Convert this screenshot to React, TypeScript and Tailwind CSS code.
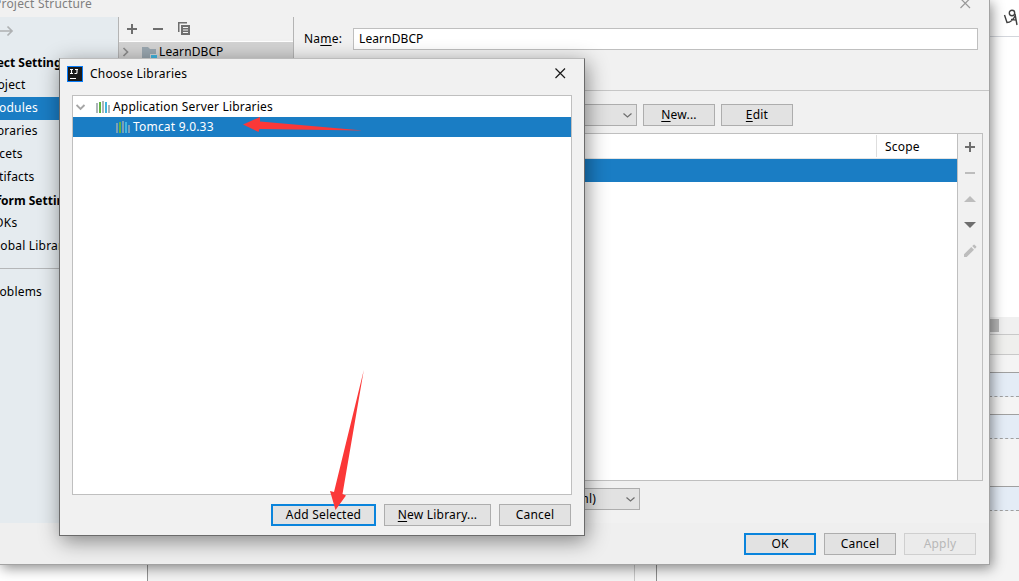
import React from 'react';
import clsx from 'clsx';

const ChevronDown: React.FC = () => (
  <svg width="11" height="7" viewBox="0 0 11 7" fill="none" stroke="#6e6e6e" strokeWidth="1.2">
    <path d="M1.500 1.500 L5.500 5 L9.500 1.500" />
  </svg>
);

const CloseIcon: React.FC<{ color: string }> = ({ color }) => (
  <svg width="11" height="11" viewBox="0 0 11 11" stroke={color} strokeWidth="1.2">
    <path d="M0.5 0.5 L10 10 M10 0.5 L0.5 10" />
  </svg>
);

const PlusIcon: React.FC = () => (
  <svg width="10" height="10" viewBox="0 0 10 10" fill="#6e6e6e">
    <path d="M4 0h2v4h4v2H6v4H4V6H0V4h4z" />
  </svg>
);

const MinusIcon: React.FC<{ color: string }> = ({ color }) => (
  <svg width="10" height="10" viewBox="0 0 10 10" fill={color}>
    <path d="M0 4h10v2H0z" />
  </svg>
);

const CopyIcon: React.FC = () => (
  <svg className="-ml-px -mt-px" width="12" height="13" viewBox="0 0 12 13" fill="#6e6e6e">
    <path d="M0 0h9v1.5H1.5V10H0z" />
    <path fillRule="evenodd" d="M3 3h9v10H3zM5 5v1h5V5zM5 7.5v1h5v-1zM5 10v1h5v-1z" />
  </svg>
);

const LibraryIcon: React.FC<{ dim?: boolean }> = ({ dim }) => (
  <svg width="14" height="12" viewBox="0 0 14 12" shapeRendering="crispEdges">
    <path d="M0 2h2v10H0zM6 0h2v12H6z" fill={dim ? '#7c9fb9' : '#adb5ba'} />
    <path d="M3 1h2v11H3z" fill="#62b543" />
    <path d="M9 1h2v11H9z" fill="#40b6e0" />
    <path d="M12 4h2v8h-2z" fill={dim ? '#7c9fb9' : '#adb5ba'} />
  </svg>
);

const IdeaLogo: React.FC = () => (
  <svg width="16" height="16" viewBox="0 0 16 16">
    <rect width="16" height="16" fill="#087cfa" />
    <rect x="1" y="1" width="14" height="14" fill="#1a1a1a" />
    <path d="M3 3.500h3M4.500 3v5M3 7.500h3M8 3.500h3M10 3v3.500q0 1-1 1H7.500" stroke="#fff" strokeWidth="1.1" fill="none" />
    <path d="M3 12h6v1H3z" fill="#fff" />
  </svg>
);

interface ButtonProps {
  width: string;
  primary?: boolean;
  disabled?: boolean;
  children: React.ReactNode;
}

const Button: React.FC<ButtonProps> = ({ width, primary, disabled, children }) => (
  <button
    className={clsx(
      'h-[22px] shrink-0 flex items-center justify-center whitespace-pre',
      width,
      primary ? 'border-2 border-[#0a84dc] bg-[#e2e2e2]' : 'border',
      !primary && (disabled ? 'border-[#cfcfcf] bg-[#ebebeb] text-[#b8b8b8]' : 'border-[#adadad] bg-[#e2e2e2]'),
    )}
  >
    {children}
  </button>
);

const sections = [
  { label: 'Project Settings', bold: true, margin: '-ml-[27px]' },
  { label: 'Project', margin: '-ml-[15px]' },
  { label: 'Modules', margin: '-ml-[12px]', selected: true },
  { label: 'Libraries', margin: '-ml-[13px]' },
  { label: 'Facets', margin: '-ml-[14px]' },
  { label: 'Artifacts', margin: '-ml-[14px]' },
  { label: 'Platform Settings', bold: true, margin: '-ml-[27px]' },
  { label: 'SDKs', margin: '-ml-[12px]' },
  { label: 'Global Libraries', margin: '-ml-[12px]' },
];

const Sidebar: React.FC = () => (
  <div className="w-[118px] h-[506px] shrink-0 bg-[#e5ebef] overflow-hidden">
    <div className="h-[34px] pt-2">
      <svg width="14" height="12" viewBox="0 0 14 12" fill="none" stroke="#afb1b3" strokeWidth="1.7">
        <path d="M0 6h12M7.500 1.500L12 6L7.500 10.500" />
      </svg>
    </div>
    {sections.map((item) => (
      <div
        key={item.label}
        className={clsx(
          'h-[23px] flex items-center whitespace-pre',
          item.bold ? 'font-bold tracking-normal' : 'pb-px',
          item.selected && 'bg-[#1a7dc4] text-white',
        )}
      >
        <span className={item.margin}>{item.label}</span>
      </div>
    ))}
    <div className="mt-2.5 border-t border-[#b4b6b8]" />
    <div className="mt-[11px] h-[23px] flex items-center">
      <span className="-ml-[13px]">Problems</span>
    </div>
  </div>
);

const ModuleList: React.FC = () => (
  <div className="w-[176px] h-[506px] shrink-0 border-x border-[#b4b4b4]">
    <div className="h-[24px] flex items-center gap-4 pl-2">
      <PlusIcon />
      <MinusIcon color="#6e6e6e" />
      <CopyIcon />
    </div>
    <div className="h-[20px] border-t border-white bg-[#d3d3d3] flex items-center">
      <svg className="ml-[3px]" width="8" height="10" viewBox="0 0 8 10" fill="none" stroke="#8c8c8c" strokeWidth="1.7">
        <path d="M1.500 1l4 4-4 4" />
      </svg>
      <svg className="ml-3 mt-1" width="15" height="13" viewBox="0 0 15 13">
        <path d="M0 0h6l2 2h6v9H0z" fill="#9aa7b0" />
        <path d="M8 7h7v6H8z" fill="#d3d3d3" />
        <path d="M9 8h6v5H9z" fill="#40b6e0" />
      </svg>
      <span className="ml-0.5 tracking-[0.1px]">LearnDBCP</span>
    </div>
  </div>
);

const DependencyTable: React.FC = () => (
  <div className="h-[348px] mt-[7px] mr-[6px] border border-[#bfbfbf] flex">
    <div className="flex-1 bg-white">
      <div className="h-[25px] flex justify-end border-b border-[#e3e3e3] pt-px pb-px">
        <div className="w-[81px] border-l border-[#dedede] pl-2 pt-0.5 flex items-center">Scope</div>
      </div>
      <div className="h-[23px] bg-[#1a7dc4]" />
    </div>
    <div className="w-[25px] border-l border-[#bfbfbf] flex flex-col items-center pt-2 gap-4">
      <PlusIcon />
      <MinusIcon color="#bdbdbd" />
      <svg width="12" height="10" viewBox="0 0 12 10"><path d="M0 8l6-6 6 6z" fill="#bdbdbd" /></svg>
      <svg width="12" height="10" viewBox="0 0 12 10"><path d="M0 2h12l-6 6z" fill="#6e6e6e" /></svg>
      <svg className="-mt-0.5" width="14" height="14" viewBox="0 0 14 14" fill="#bdbdbd">
        <path d="M1 10.300L8.300 3l2.700 2.700L3.700 13H1zM9.200 2.100l1.200-1.200q.7-.6 1.400 0l1.300 1.300q.6.700 0 1.400l-1.200 1.200z" />
      </svg>
    </div>
  </div>
);

const ModulePane: React.FC = () => (
  <div className="flex-1 min-w-0">
    <div className="h-[73px] pt-[11px] pl-[10px] flex items-start">
      <span className="w-[49px] h-[22px] flex items-center whitespace-pre">
        <span>Na<u className="underline-offset-2">m</u>e:</span>
      </span>
      <div className="w-[625px] h-[22px] border border-[#bfbfbf] bg-white pl-[5px] flex items-center tracking-[0.1px]">LearnDBCP</div>
    </div>
    <div className="border-t border-[#c6c6c6] pt-[13px] flex gap-[6px]">
      <div className="w-[343px] h-[22px] border border-[#adadad] bg-[#e2e2e2] flex items-center justify-end pr-[3px]">
        <ChevronDown />
      </div>
      <Button width="w-[72px]"><u className="underline-offset-2">N</u>ew...</Button>
      <Button width="w-[72px]"><u className="underline-offset-2">E</u>dit</Button>
    </div>
    <DependencyTable />
    <div className="mt-[7px] w-[346px] h-[22px] border border-[#adadad] bg-[#e2e2e2] flex items-center justify-end pr-[3px]">
      <span className="mr-[29px] whitespace-pre">IntelliJ IDEA (.iml)</span>
      <ChevronDown />
    </div>
  </div>
);

const ProjectStructureWindow: React.FC = () => (
  <div className="absolute left-0 top-0 w-[990px] h-[565px] border-r border-b border-[#a3a3a3] bg-[#f1f1f1] shadow-[2px_3px_12px_rgba(0,0,0,0.45)] overflow-hidden">
    <div className="h-[17px] flex justify-between text-[#7f7f7f]">
      <span className="-mt-[6px] -ml-[6px] h-[20px] flex items-center whitespace-pre">Project Structure</span>
      <span className="-mt-[2px] mr-[18px]"><CloseIcon color="#999999" /></span>
    </div>
    <div className="h-[506px] flex">
      <Sidebar />
      <ModuleList />
      <ModulePane />
    </div>
    <div className="h-[42px] bg-[#efefef] pt-[10px] pr-[13px] flex justify-end gap-2">
      <Button width="w-[72px]" primary>OK</Button>
      <Button width="w-[72px]">Cancel</Button>
      <Button width="w-[72px]" disabled>Apply</Button>
    </div>
  </div>
);

const ChooseLibrariesDialog: React.FC = () => (
  <div className="absolute left-[59px] top-[58px] w-[526px] h-[478px] border border-[#6b6b6b] border-t-[#bbbbbb] bg-[#f1f1f1] shadow-[2px_5px_20px_rgba(0,0,0,0.45)] flex flex-col">
    <div className="h-[36px] shrink-0 pl-[7px] pr-[18px] pb-[7px] flex items-center">
      <IdeaLogo />
      <span className="ml-[7px] flex-1">Choose Libraries</span>
      <CloseIcon color="#1a1a1a" />
    </div>
    <div className="mx-3 h-[400px] shrink-0 border border-[#bfbfbf] bg-white">
      <div className="h-[21px] flex items-center pl-[3px]">
        <svg width="10" height="8" viewBox="0 0 10 8" fill="none" stroke="#a6a6a6" strokeWidth="1.9">
          <path d="M0.500 2l4 4 4-4" />
        </svg>
        <span className="ml-[10px]"><LibraryIcon /></span>
        <span className="ml-[3px] whitespace-pre">Application Server Libraries</span>
      </div>
      <div className="h-[20px] bg-[#1a7dc4] text-white flex items-center pl-[43px]">
        <LibraryIcon dim />
        <span className="ml-[3px] whitespace-pre">Tomcat 9.0.33</span>
      </div>
    </div>
    <div className="pt-[9px] pr-[13px] flex justify-end gap-2">
      <Button width="w-[105px]" primary>Add Selected</Button>
      <Button width="w-[107px]"><u className="underline-offset-2">N</u>ew Library...</Button>
      <Button width="w-[72px]">Cancel</Button>
    </div>
  </div>
);

const EditorBackdrop: React.FC = () => (
  <div className="h-[581px] flex flex-col bg-[#f4f4f4]">
    <div className="h-[565px] flex flex-col pl-[989px]">
      <div className="h-[37px] shrink-0 bg-white border-b border-[#d3d6dc] pl-[14px] pt-[9px]">
        <svg width="16" height="17" viewBox="0 0 16 17" fill="none" stroke="#404040" strokeWidth="1.4">
          <path d="M1.500 6L4 13.500Q9 13.500 12 7M8 10.500L13.500 11M12 5L14 16" />
          <circle cx="9" cy="4" r="2.700" />
        </svg>
      </div>
      <div className="h-[280px] shrink-0 bg-white" />
      <div className="h-[18px] shrink-0 bg-[#f0f0f0] border-b border-[#c9c9c9] pt-0.5">
        <div className="w-[10px] h-[13px] bg-[#b8b8b8]" />
      </div>
      <div className="h-[20px] shrink-0 bg-[#efefed] border-b border-[#c9c9c9]" />
      <div className="mt-[17px] h-[25px] shrink-0 bg-[#e4ecf6] border-y border-t-[#a0a0a0] border-b-[#a0a0a0] [border-bottom-style:dashed]" />
      <div className="mt-[17px] h-[25px] shrink-0 bg-[#e4ecf6] border-y border-t-[#a0a0a0] border-b-[#a0a0a0] [border-bottom-style:dashed]" />
      <div className="mt-[47px] h-[25px] shrink-0 bg-[#e4ecf6] border-y border-t-[#a0a0a0] border-b-[#a0a0a0] [border-bottom-style:dashed]" />
    </div>
    <div className="h-[16px] flex">
      <div className="w-[147px] bg-white" />
      <div className="w-[488px] border-x border-l-[#929292] border-r-[#c6c6c6] bg-[#f3f3f3]" />
      <div className="w-[22px] border-r border-[#8c8c8c]" />
    </div>
  </div>
);

const App: React.FC = () => {
  return (
    <div className="relative w-[1019px] h-[581px] overflow-hidden font-['Noto_Sans','Open_Sans',sans-serif] text-[12px] leading-4 tracking-[0.2px] text-black">
      <EditorBackdrop />
      <ProjectStructureWindow />
      <ChooseLibrariesDialog />
      {/* annotation arrows */}
      <svg className="absolute inset-0" width="1019" height="581" viewBox="0 0 1019 581" fill="#fb3838">
        <path d="M243 124.500L260 117L260 121.500L363 130.500L259.500 129L258.500 132z" />
        <path d="M363.800 370L342.500 494L346 495.500L335.500 510L330 491L334 492z" />
      </svg>
    </div>
  );
};

export default App;
